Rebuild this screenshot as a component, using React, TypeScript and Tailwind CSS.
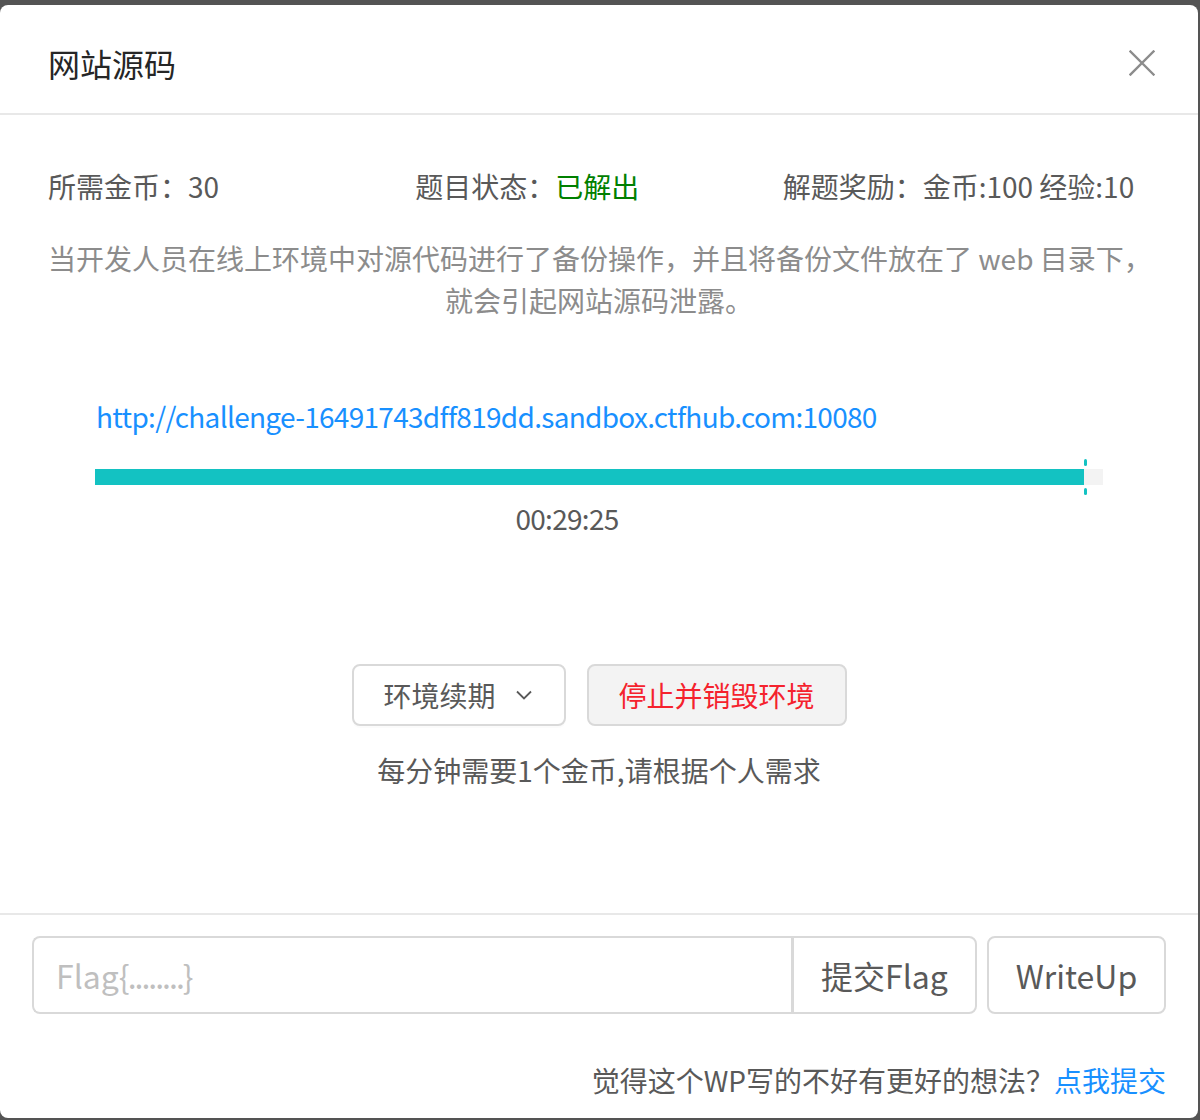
export default function App() {
  return (
    <div className='w-[1200px] h-[1120px] bg-[#545454] pt-[5px] overflow-hidden font-["Noto_Sans_CJK_SC",sans-serif]'>
      <div className="w-[1198px] h-[1113px] bg-white rounded-[8px] flex flex-col">
        {/* Header */}
        <div className="h-[110px] shrink-0 border-b-2 border-[#e8e8e8] flex items-center justify-between pl-[48px] pt-[7px]">
          <div className="text-[32px] leading-[44px] text-[#262626]">网站源码</div>
          <div className="w-[112px] h-full flex items-center justify-center">
            <svg width="26" height="26" viewBox="0 0 26 26" fill="none">
              <path d="M1.5 1.5 L24.5 24.5 M24.5 1.5 L1.5 24.5" stroke="#8c8c8c" strokeWidth="2.4" strokeLinecap="square" />
            </svg>
          </div>
        </div>

        {/* Body */}
        <div className="flex-1 px-[48px] pt-[49px] text-[28px] text-[#595959]">
          <div className="grid grid-cols-3 leading-[44px]">
            <div>所需金币：30</div>
            <div>
              题目状态：<span className="text-[#008000]">已解出</span>
            </div>
            <div>解题奖励：金币:100 经验:10</div>
          </div>

          <div className="mt-[29px] text-center leading-[42px] text-[#8c8c8c] whitespace-nowrap">
            <div>当开发人员在线上环境中对源代码进行了备份操作，并且将备份文件放在了 web 目录下，</div>
            <div>就会引起网站源码泄露。</div>
          </div>

          <div className="mt-[73px] pl-[48px] leading-[44px] text-[#1890ff] tracking-[-0.7px]">
            http://challenge-16491743dff819dd.sandbox.ctfhub.com:10080
          </div>

          <div className="mt-[31px] ml-[47px] w-[1008px] h-[16px] bg-[#f3f3f3] relative">
            <div className="h-full w-[989px] bg-[#13c2c2]" />
            <div className="absolute left-[989px] top-[-10px] w-[3px] h-[7px] rounded-[2px] bg-[#13c2c2]" />
            <div className="absolute left-[989px] bottom-[-10px] w-[3px] h-[7px] rounded-[2px] bg-[#13c2c2]" />
          </div>

          <div className="mt-[11px] ml-[47px] w-[944px] text-center leading-[44px] tracking-[-0.7px]">00:29:25</div>

          <div className="mt-[124px] flex justify-center gap-[21px]">
            <button className="h-[62px] w-[214px] border-2 border-[#d9d9d9] rounded-[8px] bg-white flex items-center pl-[30px] text-[28px] text-[#595959] shadow-[0_2px_0_rgba(0,0,0,0.015)]">
              <span className="leading-[44px]">环境续期</span>
              <svg className="ml-[20px]" width="16" height="10" viewBox="0 0 16 10" fill="none">
                <path d="M1 1.5 L8 8.5 L15 1.5" stroke="#595959" strokeWidth="1.8" />
              </svg>
            </button>
            <button className="h-[62px] w-[260px] border-2 border-[#d9d9d9] rounded-[8px] bg-[#f3f3f3] flex items-center justify-center text-[28px] text-[#f5222d]">
              <span className="leading-[44px]">停止并销毁环境</span>
            </button>
          </div>

          <div className="mt-[22px] text-center leading-[44px]">每分钟需要1个金币,请根据个人需求</div>
        </div>

        {/* Footer */}
        <div className="h-[205px] shrink-0 border-t-2 border-[#e8e8e8] pt-[21px] px-[32px]">
          <div className="flex">
            <div className="flex-1 h-[78px] border-2 border-r-0 border-[#d9d9d9] rounded-l-[8px] flex items-center pl-[22px] text-[32px] text-[#bfbfbf]">
              Flag<span className="tracking-[-2px]">{"{........"}</span>{"}"}
            </div>
            <button className="w-[186px] h-[78px] border-2 border-l-[3px] border-[#d9d9d9] rounded-r-[8px] bg-white flex items-center justify-center text-[32px] text-[#595959]">
              提交Flag
            </button>
            <button className="ml-[10px] w-[179px] h-[78px] border-2 border-[#d9d9d9] rounded-[8px] bg-white flex items-center justify-center text-[32px] text-[#595959]">
              WriteUp
            </button>
          </div>
          <div className="mt-[44px] text-right text-[28px] leading-[44px] text-[#595959]">
            觉得这个WP写的不好有更好的想法？<span className="text-[#1890ff]">点我提交</span>
          </div>
        </div>
      </div>
    </div>
  );
}
